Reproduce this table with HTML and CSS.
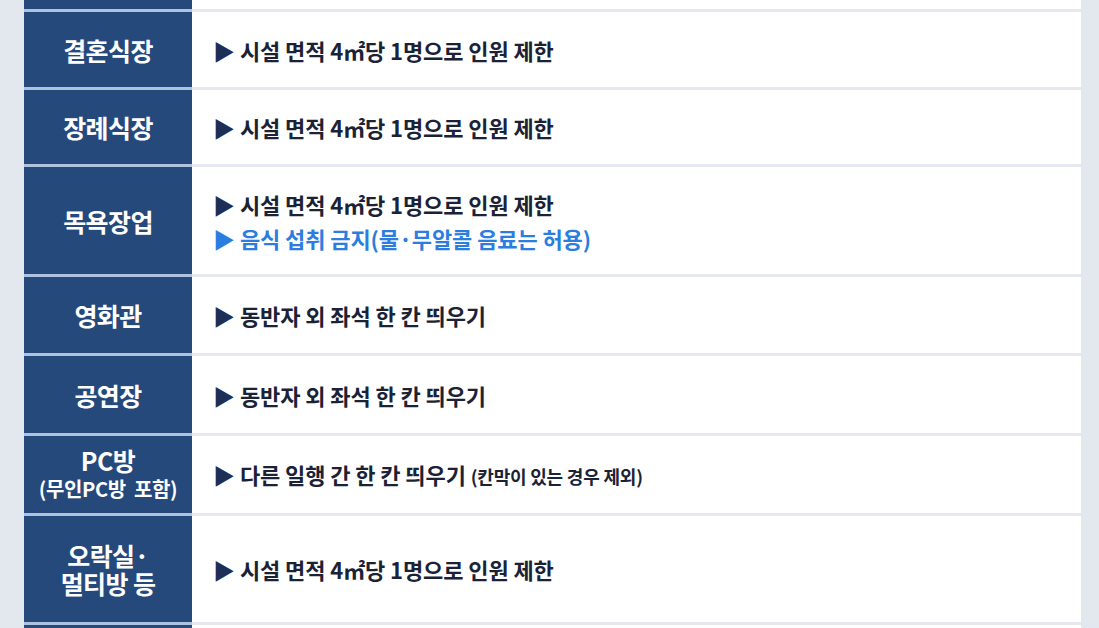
FILE: index.html
```html
<!DOCTYPE html>
<html>
  <head>
    <meta charset="utf-8">
    <title>시설별 방역수칙</title>
    <link rel="stylesheet" href="styles.css">
  </head>
  <body>
    <div class="board">
      <div class="row cut">
        <div class="label"></div>
        <div class="rule"></div>
      </div>
      <div class="row h75">
        <div class="label">결혼식장</div>
        <div class="rule"><p><span class="mark">▶</span> 시설 면적 4㎡당 1명으로 인원 제한</p></div>
      </div>
      <div class="row h74">
        <div class="label">장례식장</div>
        <div class="rule"><p><span class="mark">▶</span> 시설 면적 4㎡당 1명으로 인원 제한</p></div>
      </div>
      <div class="row h107">
        <div class="label">목욕장업</div>
        <div class="rule">
          <p><span class="mark">▶</span> 시설 면적 4㎡당 1명으로 인원 제한</p>
          <p class="blue"><span class="mark">▶</span> 음식 섭취 금지(물·무알콜 음료는 허용)</p>
        </div>
      </div>
      <div class="row h76">
        <div class="label">영화관</div>
        <div class="rule"><p><span class="mark">▶</span> 동반자 외 좌석 한 칸 띄우기</p></div>
      </div>
      <div class="row h77">
        <div class="label">공연장</div>
        <div class="rule"><p><span class="mark">▶</span> 동반자 외 좌석 한 칸 띄우기</p></div>
      </div>
      <div class="row h77">
        <div class="label">PC방<small>(무인PC방&nbsp; 포함)</small></div>
        <div class="rule"><p><span class="mark">▶</span> 다른 일행 간 한 칸 띄우기 <small>(칸막이 있는 경우 제외)</small></p></div>
      </div>
      <div class="row h106">
        <div class="label"><span>오락실·</span><span>멀티방 등</span></div>
        <div class="rule"><p><span class="mark">▶</span> 시설 면적 4㎡당 1명으로 인원 제한</p></div>
      </div>
      <div class="row end">
        <div class="label"></div>
        <div class="rule"></div>
      </div>
    </div>
  </body>
</html>
```

FILE: styles.css
```css
body {
  margin: 0;
  padding: 0;
  background-color: #e3e7ee;
  font-family: "Noto Sans CJK KR", "Noto Sans", sans-serif;
  overflow: hidden;
}
.board {
  margin: 0 18px 0 24px;
  background-color: #ffffff;
}
.row {
  display: grid;
  grid-template-columns: 168px 1fr;
}
.row + .row .label {
  border-top: 3px solid #aec3e0;
}
.row + .row .rule {
  border-top: 3px solid #e5e8ef;
}
.cut { height: 9px; }
.end { height: 6px; }
.h74 { height: 77px; }
.h75 { height: 78px; }
.h76 { height: 79px; }
.h77 { height: 80px; }
.h106 { height: 109px; }
.h107 { height: 110px; }
.label {
  background-color: #26497b;
  color: #ffffff;
  font-size: 25px;
  font-weight: 700;
  letter-spacing: -0.6px;
  line-height: 28px;
  display: flex;
  flex-direction: column;
  align-items: center;
  justify-content: center;
  text-align: center;
}
.label small {
  font-size: 20px;
  letter-spacing: -0.4px;
  line-height: 30px;
}
.rule {
  display: flex;
  flex-direction: column;
  justify-content: center;
  padding-left: 21px;
  color: #1b2235;
  font-size: 22px;
  font-weight: 700;
  letter-spacing: -0.1px;
}
.rule p {
  margin: 0;
  line-height: 34px;
}
.rule small {
  font-size: 18px;
  letter-spacing: -0.2px;
}
.mark {
  color: #1d2f57;
  letter-spacing: 0;
}
.blue,
.blue .mark {
  color: #2b7ddf;
}
```
